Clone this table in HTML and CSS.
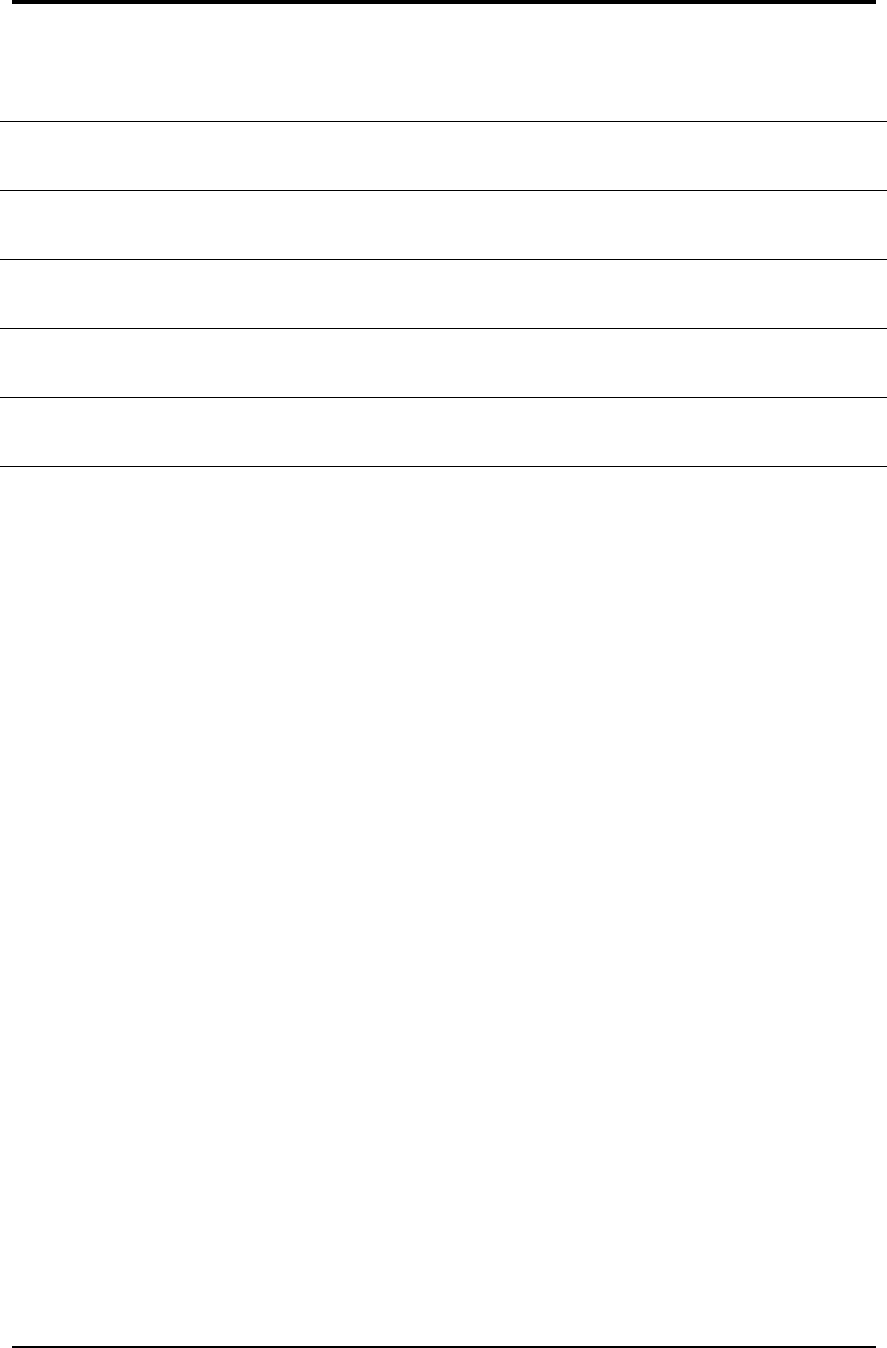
FILE: index.html
```html
<!DOCTYPE html>
<html lang="en">
<head>
  <meta charset="UTF-8" />
  <meta name="viewport" content="width=device-width, initial-scale=1.0" />
  <title>Sheet</title>
  <link rel="stylesheet" href="styles.css">
</head>
<body>
  <div class="page">
    <header class="head">
      <div class="rule-top"></div>
    </header>
    <section class="rows">
      <div class="row"></div>
      <div class="row"></div>
      <div class="row"></div>
      <div class="row"></div>
      <div class="row"></div>
    </section>
    <footer class="foot">
      <div class="rule-bottom"></div>
    </footer>
  </div>
</body>
</html>
```

FILE: styles.css
```css
body {
  font-family: 'Liberation Sans', Arial, sans-serif;
  margin: 0;
  background: #ffffff;
  color: #000000;
}
.page {
  height: 1348px;
  display: flex;
  flex-direction: column;
  overflow: hidden;
}
.head {
  height: 121px;
  padding: 0 11px 0 12px;
}
.rule-top {
  height: 4px;
  background: #000000;
}
.rows {
  border-top: 1px solid #000000;
}
.row {
  height: 68px;
  border-bottom: 1px solid #000000;
}
.foot {
  margin-top: auto;
  padding: 0 11px 0 12px;
}
.rule-bottom {
  height: 2px;
  background: #000000;
}
```
